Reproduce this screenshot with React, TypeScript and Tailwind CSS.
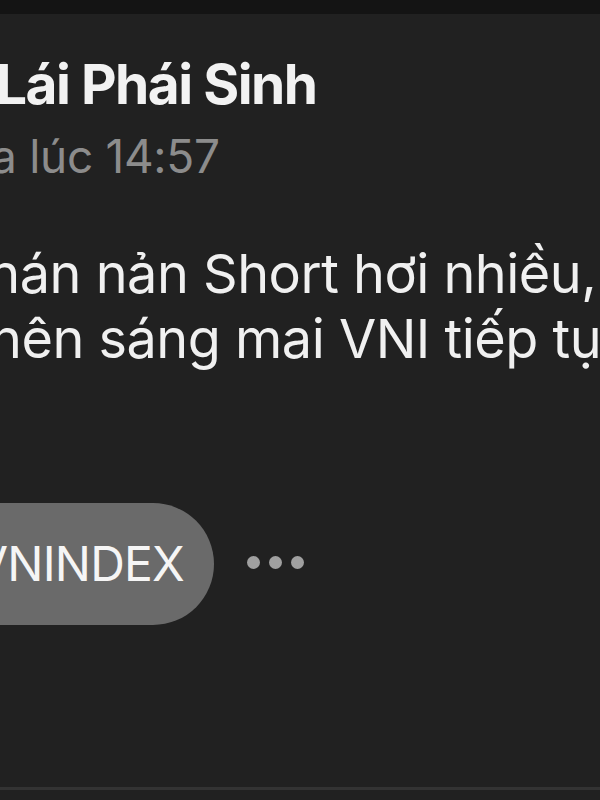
export default function App() {
  return (
    <div className="w-[600px] h-[800px] overflow-hidden bg-[#212121] flex flex-col" style={{ fontFamily: 'Inter, "Noto Sans", sans-serif' }}>
      <div className="h-[14px] bg-[#141414] shrink-0" />

      <div className="flex flex-col whitespace-nowrap">
        <h1 className="mt-[38px] ml-[-4px] text-[55px] leading-[64px] font-bold text-[#f2f2f2] tracking-[-1.5px]">
          Lái Phái Sinh
        </h1>
        <p className="mt-[12px] ml-[-9px] text-[46px] leading-[56px] text-[#8c8c8c] tracking-[-0.3px]">a lúc 14:57</p>

        <div className="mt-[57px] text-[54px] leading-[65px] text-[#f0f0f0] tracking-[-0.5px]">
          <p className="ml-[-42px]">chán nản Short hơi nhiều,</p>
          <p className="ml-[-10px]">nên sáng mai VNI tiếp tục</p>
        </div>

        <div className="mt-[132px] flex items-center">
          <span className="ml-[-65px] h-[122px] pl-[40px] pr-[30px] rounded-full bg-[#6a6a6a] text-[#f5f5f5] text-[48px] tracking-[-0.8px] flex items-center">
            VNINDEX
          </span>
          <div className="ml-[33px] mt-[-3px] flex gap-[9px]">
            <span className="w-[13px] h-[13px] rounded-full bg-[#a0a0a0]" />
            <span className="w-[13px] h-[13px] rounded-full bg-[#a0a0a0]" />
            <span className="w-[13px] h-[13px] rounded-full bg-[#a0a0a0]" />
          </div>
        </div>
      </div>

      <div className="mt-auto mb-[10px] h-[3px] bg-[#333333]" />
    </div>
  )
}
